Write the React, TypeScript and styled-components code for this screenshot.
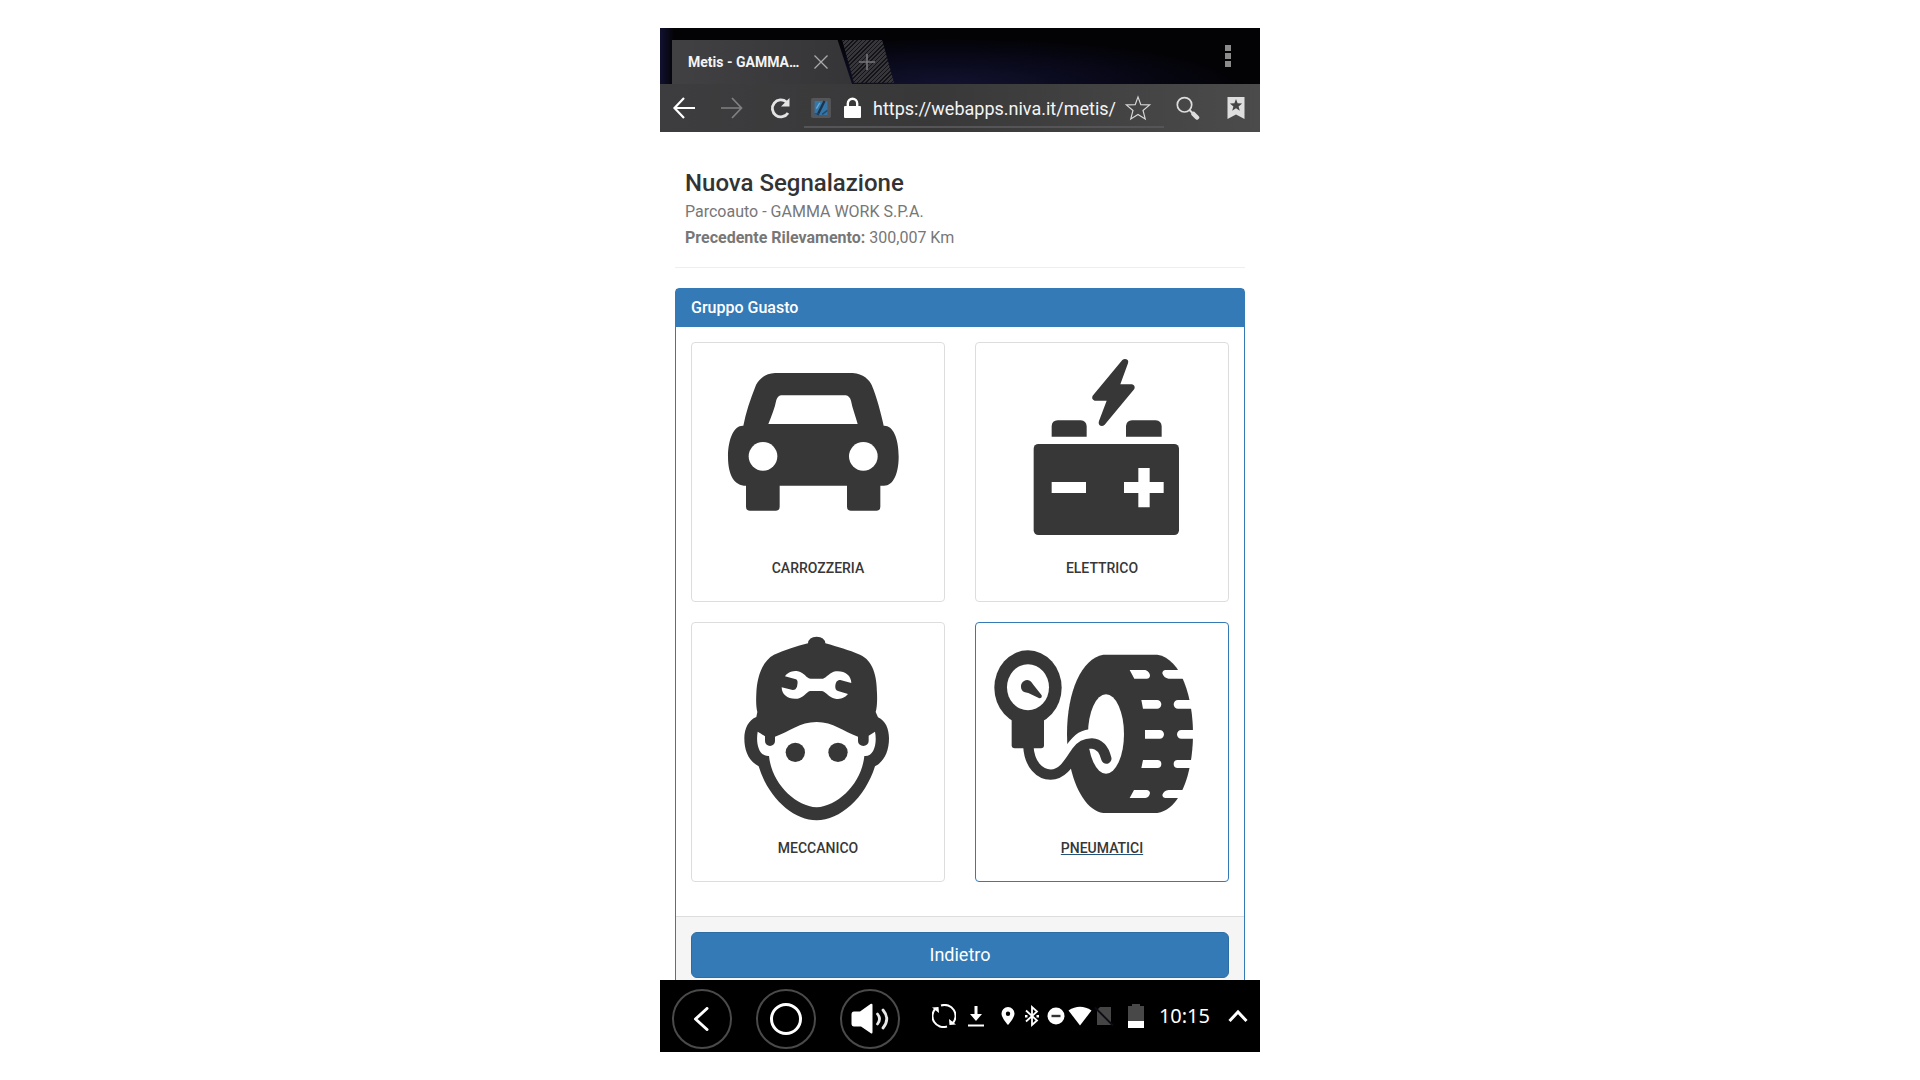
import React from "react";
import styled, { createGlobalStyle, css } from "styled-components";

const ink = "#373737";
const blue = "#337ab7";

const GlobalStyle = createGlobalStyle`
  *, *::before, *::after { box-sizing: border-box; }
  body { margin: 0; background: #fff; font-family: Roboto, "Liberation Sans", sans-serif; }
  button, input { font: inherit; }
  svg { display: block; }
`;

const Device = styled.div`
  display: flex;
  flex-direction: column;
  width: 100%;
  max-width: 600px;
  height: calc(100vh - 56px);
  margin: 28px auto;
  overflow: hidden;
  background: #fff;
`;

const plainButton = css`
  display: flex;
  align-items: center;
  justify-content: center;
  padding: 0;
  border: 0;
  background: none;
  color: inherit;
  cursor: pointer;
`;

const TabStrip = styled.header`
  display: flex;
  flex: none;
  align-items: flex-end;
  height: 56px;
  padding-left: 12px;
  background:
    linear-gradient(90deg, #111130 0, transparent 14px),
    radial-gradient(ellipse 290px 46px at 48% 100%, #12122f, #080818 60%, transparent),
    #030306;
`;

const Tab = styled.div`
  display: flex;
  align-items: center;
  width: 180px;
  height: 44px;
  padding: 0 19px 0 16px;
  background: linear-gradient(90deg, #414143, #353537);
  clip-path: polygon(0 0, 92% 0, 100% 100%, 0 100%);
  color: #f4f4f4;
`;

const TabTitle = styled.span`
  flex: 1;
  font-size: 14px;
  font-weight: 700;
  white-space: nowrap;
`;

const CloseTab = styled.button`
  ${plainButton}
  width: 24px;
  height: 24px;
`;

const NewTab = styled.button`
  ${plainButton}
  width: 54px;
  height: 44px;
  margin-left: -12px;
  background: repeating-linear-gradient(135deg, #131318 0 1px, #37373b 1px 3px);
  clip-path: polygon(4% 0, 78% 0, 100% 97%, 26% 97%);
`;

const MenuButton = styled.button`
  ${plainButton}
  align-self: center;
  width: 32px;
  height: 32px;
  margin-left: auto;
  margin-right: 16px;
`;

const Toolbar = styled.nav`
  display: flex;
  flex: none;
  height: 48px;
  background: linear-gradient(90deg, #3d3d3f, #383839 45%, #4b4b4b);
  color: #fff;
`;

const ToolButton = styled.button`
  ${plainButton}
  flex: none;
  width: 48px;
  height: 48px;
`;

const AddressBar = styled.div`
  display: flex;
  flex: 1;
  align-items: center;
  min-width: 0;
  height: 44px;
  padding: 6px 12px 0 3px;
  border: solid #555557;
  border-width: 0 0 2px;
`;

const AddressInput = styled.input`
  flex: 1;
  min-width: 0;
  height: 32px;
  padding: 0;
  border: 0;
  outline: 0;
  background: none;
  color: #f4f4f4;
  font-size: 18px;
`;

const StarButton = styled.button`
  ${plainButton}
  width: 28px;
  height: 28px;
`;

const Page = styled.main`
  flex: 1;
  min-height: 0;
  overflow: hidden;
  padding: 0 15px;
`;

const Intro = styled.header`
  padding: 35px 10px 16px;
  border-bottom: 1px solid #eee;
  color: #777;
  font-size: 16px;
  line-height: 26px;
`;

const Title = styled.h1`
  margin: 0;
  color: #333;
  font-size: 24px;
  font-weight: 500;
  line-height: 32px;
`;

const Line = styled.p`
  margin: 0;
`;

const Panel = styled.section`
  margin-top: 20px;
  border: 1px solid ${blue};
  border-radius: 4px;
`;

const PanelTitle = styled.h2`
  margin: 0;
  padding: 0 15px;
  background: ${blue};
  color: #fff;
  font-size: 16px;
  font-weight: 500;
  line-height: 38px;
`;

const Grid = styled.div`
  display: grid;
  grid-template-columns: 1fr 1fr;
  gap: 20px 30px;
  padding: 15px 15px 34px;
`;

const Card = styled.a<{ $active?: boolean }>`
  display: flex;
  flex-direction: column;
  padding-bottom: 20px;
  border: 1px solid ${(p) => (p.$active ? blue : "#ddd")};
  border-radius: 4px;
  color: ${ink};
  font-size: 14px;
  font-weight: 500;
  line-height: 26px;
  text-align: center;
  text-decoration: ${(p) => (p.$active ? "underline #23527c" : "none")};
`;

const Art = styled.svg`
  width: 100%;
  height: 212px;
  fill: ${ink};
`;

const PanelFooter = styled.footer`
  padding: 15px;
  border-top: 1px solid #ddd;
  background: #f5f5f5;
`;

const BackButton = styled.button`
  width: 100%;
  height: 46px;
  padding: 0 16px 2px;
  border: 1px solid #2e6da4;
  border-radius: 6px;
  background: ${blue};
  color: #fff;
  font-size: 18px;
`;

const SystemBar = styled.footer`
  display: flex;
  flex: none;
  align-items: center;
  justify-content: space-between;
  height: 72px;
  padding: 0 10px 0 12px;
  background: #000;
  color: #fff;
`;

const NavKeys = styled.div`
  display: flex;
  gap: 24px;
  padding-top: 6px;
`;

const NavKey = styled.button`
  ${plainButton}
  width: 60px;
  height: 60px;
  border: 2px solid #4a4a4a;
  border-radius: 50%;
`;

const Status = styled.div`
  display: flex;
  align-items: center;
  gap: 8px;
`;

const StatusGroup = styled.div`
  display: flex;
`;

const Clock = styled.time`
  padding: 0 8px 0 3px;
  font-family: "Noto Sans", "Open Sans", sans-serif;
  font-size: 20px;
  line-height: 24px;
`;

const MoreButton = styled.button`
  ${plainButton}
`;

type IconProps = { size?: number; children: React.ReactNode };

const Icon = ({ size = 24, children }: IconProps) => (
  <svg width={size} height={size} viewBox="0 0 24 24" fill="none" stroke="currentColor" strokeWidth="2" aria-hidden="true">
    {children}
  </svg>
);

const CarArt = () => (
  <Art viewBox="36 39 756 636" aria-hidden="true">
    <path d="M285 129H518C550 131 568 150 575 165C590 200 603 250 611 287C637 285 656 320 656 380C656 430 640 467 612 467H601V530Q601 542 589 542H513Q501 542 501 530V467H299V530Q299 542 287 542H210Q198 542 198 530V467C163 467 144 435 144 380C144 325 163 285 190 287C197 250 210 210 228 165C240 142 260 130 285 129Z" />
    <path fill="#fff" d="M303 196H497Q509 198 513 212C517 235 527 258 533 282H265C275 258 284 235 289 210Q293 198 303 196Z" />
    <circle cx="249" cy="379" r="43" fill="#fff" />
    <circle cx="550" cy="379" r="43" fill="#fff" />
  </Art>
);

const BatteryArt = () => (
  <Art viewBox="48 39 756 636" aria-hidden="true">
    <path d="M487 90Q495 84 503 90Q506 94 504 100L481 163H516Q527 167 523 177L434 284Q426 291 418 285Q414 280 417 273L440 212H404Q393 207 398 197Z" />
    <path d="M275 320V288Q276 272 293 271H362Q379 272 380 289V320ZM498 320V288Q500 272 516 271H587Q604 272 605 289V320Z" />
    <rect x="221" y="342" width="436" height="273" rx="14" />
    <path fill="#fff" d="M275 456H378V489H275ZM535 414H569V456H611V489H569V532H535V489H492V456H535Z" />
  </Art>
);

const MechanicArt = () => (
  <Art viewBox="36 39 756 636" aria-hidden="true">
    <path d="M384 100Q386 80 410 80Q434 80 436 100C475 111 505 120 540 134C580 152 591 200 591 250C592 275 591 292 587 306L594 322C617 332 627 358 627 385C627 425 612 455 585 469C555 565 480 631 410 631C340 631 265 565 236 469C207 453 193 425 193 385C193 355 206 330 229 321L232 306C228 290 228 270 229 250C231 195 250 151 282 134C315 120 350 108 384 100Z" />
    <path fill="#fff" d="M233 365Q243 371 255 379V393A15 15 0 0 0 285 393V380C330 365 358 336 410 336C460 336 490 365 534 380V393A16 15 0 0 0 566 393V377L585 365C592 400 582 441 553 438C545 520 475 588 410 592C345 588 275 520 267 438C236 440 227 400 233 365Z" />
    <circle cx="346" cy="427" r="29" />
    <circle cx="474" cy="427" r="29" />
    <path fill="#fff" d="M315 199C323 186 338 183 350 183C369 185 377 200 385 204Q388 206 392 206H429C440 203 449 187 467 184C492 181 514 195 514 219L481 210C470 210 468 217 466 226C465 235 467 241 474 243L504 252C495 264 481 267 470 267C450 265 440 250 433 246Q429 243 424 243H390C379 246 372 262 353 266C325 269 305 255 305 232L338 240C346 240 348 236 351 230C354 217 354 208 345 207Z" />
  </Art>
);

const TyreArt = () => (
  <Art viewBox="48 39 756 636" aria-hidden="true">
    <path d="M430 134H592C665 145 699 265 699 372C699 480 665 598 592 609H430C370 602 321 500 321 372C321 244 365 145 430 134Z" />
    <ellipse cx="438" cy="372" rx="54" ry="119" fill="#fff" />
    <path fill="#fff" d="M314 413C335 383 355 361 388 358L395 390C355 395 348 430 320 450Z" />
    <path d="M205 408C208 465 240 494 272 494C310 494 331 452 350 424C362 407 378 400 395 400C422 402 434 425 439 446" fill="none" stroke={ink} strokeWidth="31" strokeLinecap="round" />
    <ellipse cx="204" cy="233" rx="101" ry="112" />
    <rect x="155" y="300" width="97" height="115" rx="9" />
    <ellipse cx="204" cy="232" rx="63" ry="69" fill="#fff" />
    <path d="M186 241C178 226 187 210 202 210C211 211 215 217 220 224L245 256Q247 265 238 265L205 249Q190 247 186 241Z" />
    <path
      fill="#fff"
      d="M509 180H556Q570 186 570 197Q569 206 560 206H523ZM544 270H591A13 13 0 0 1 591 296H549ZM555 360H599A13 13 0 0 1 599 386H555ZM549 450H592A12 12 0 0 1 592 474H544ZM522 540H560Q569 541 570 549Q568 562 556 564H509ZM700 180H617Q607 181 607 190Q611 204 626 206H700ZM704 270H654A13 13 0 0 0 654 296H704ZM704 360H664A13 13 0 0 0 664 386H704ZM704 450H653A12 12 0 0 0 653 474H704ZM700 540H626Q611 541 607 555Q608 564 617 564H700Z"
    />
  </Art>
);

const groups = [
  { label: "CARROZZERIA", art: <CarArt /> },
  { label: "ELETTRICO", art: <BatteryArt /> },
  { label: "MECCANICO", art: <MechanicArt /> },
  { label: "PNEUMATICI", art: <TyreArt />, active: true },
];

export default function App() {
  return (
    <>
      <GlobalStyle />
      <Device>
        <TabStrip>
          <Tab>
            <TabTitle>Metis - GAMMA…</TabTitle>
            <CloseTab aria-label="Chiudi scheda">
              <svg width="14" height="14" viewBox="0 0 14 14" stroke="#aaa" strokeWidth="1.3">
                <path d="M.5.5l13 13M13.500.5l-13 13" />
              </svg>
            </CloseTab>
          </Tab>
          <NewTab aria-label="Nuova scheda">
            <svg width="16" height="16" viewBox="0 0 16 16" stroke="#77777b" strokeWidth="1.6">
              <path d="M8 0v16M0 8h16" />
            </svg>
          </NewTab>
          <MenuButton aria-label="Menu">
            <svg width="6" height="22" viewBox="0 0 6 22" fill="#8b8b8b">
              <path d="M0 0h6v6H0zM0 8h6v6H0zM0 16h6v6H0z" />
            </svg>
          </MenuButton>
        </TabStrip>

        <Toolbar aria-label="Browser">
          <ToolButton aria-label="Indietro nella cronologia">
            <Icon>
              <path strokeWidth="2.2" d="M23 12H3M12 2 2.500 12l9.500 10" />
            </Icon>
          </ToolButton>
          <ToolButton aria-label="Avanti">
            <Icon>
              <path stroke="#808080" strokeWidth="1.700" d="M1 12h20M12 2l9.500 10L12 22" />
            </Icon>
          </ToolButton>
          <ToolButton aria-label="Ricarica">
            <Icon>
              <path stroke="#e4e4e4" strokeWidth="2.8" d="M20 17A8.500 8.500 0 1 1 18.500 6" />
              <path fill="#e4e4e4" stroke="none" d="M21.500 2v8.500H13Z" />
            </Icon>
          </ToolButton>
          <AddressBar>
            <Icon size={28}>
              <rect x="3.500" y="3.500" width="17" height="17" rx="1.500" fill="#55565a" stroke="none" />
              <path fill="#3576a8" stroke="none" d="M6.500 6h11v12h-11z" />
              <path stroke="#1c3348" strokeWidth="2" d="M9 18 15 6" />
              <path stroke="#24486a" strokeWidth="1.200" d="M13 17.500l4.500-3.500M6.500 17h4" />
              <path stroke="#63acd8" strokeWidth="1.200" d="M8 12.500 11 7.500" />
            </Icon>
            <svg width="38" height="24" viewBox="0 0 38 24" aria-hidden="true">
              <rect x="9" y="10" width="17" height="12" rx="1" fill="#fff" />
              <path d="M12.800 11V7.500a4.700 4.700 0 0 1 9.400 0V11" fill="none" stroke="#fff" strokeWidth="2.400" />
            </svg>
            <AddressInput aria-label="Indirizzo" defaultValue="https://webapps.niva.it/metis/" />
            <StarButton aria-label="Aggiungi ai preferiti">
              <Icon size={28}>
                <path stroke="#d8d8d8" strokeWidth="1" d="m12 2.500 2.400 6.600 7.600.2-5.700 4.800 1.900 7.300L12 17.600l-6.200 3.800 1.900-7.300L2 9.300l7.600-.2Z" />
              </Icon>
            </StarButton>
          </AddressBar>
          <ToolButton aria-label="Cerca">
            <Icon>
              <circle cx="8.500" cy="8.800" r="7.200" stroke="#ddd" strokeWidth="1.700" />
              <path stroke="#ddd" strokeWidth="2" d="m13.500 14 3 3" />
              <path stroke="#ddd" strokeWidth="4.500" strokeLinecap="round" d="m17.500 18 3.500 3.500" />
            </Icon>
          </ToolButton>
          <ToolButton aria-label="Segnalibri">
            <Icon>
              <path fill="#dedede" stroke="none" d="M3.500 1h17v22L12 18.500 3.500 23Z" />
              <path fill="#444" stroke="none" d="m12 3 1.600 4.300 4.500.2-3.500 2.900 1.200 4.400L12 12.300l-3.800 2.500 1.200-4.400-3.500-2.900 4.500-.2Z" />
            </Icon>
          </ToolButton>
        </Toolbar>

        <Page>
          <Intro>
            <Title>Nuova Segnalazione</Title>
            <Line>Parcoauto - GAMMA WORK S.P.A.</Line>
            <Line>
              <b>Precedente Rilevamento:</b> 300,007 Km
            </Line>
          </Intro>
          <Panel>
            <PanelTitle>Gruppo Guasto</PanelTitle>
            <Grid>
              {groups.map((g) => (
                <Card key={g.label} href="#" $active={g.active}>
                  {g.art}
                  <span>{g.label}</span>
                </Card>
              ))}
            </Grid>
            <PanelFooter>
              <BackButton>Indietro</BackButton>
            </PanelFooter>
          </Panel>
        </Page>

        <SystemBar>
          <NavKeys>
            <NavKey aria-label="Indietro">
              <Icon>
                <path strokeWidth="3" strokeLinecap="round" strokeLinejoin="round" d="M17 1.500 5.500 12 17 22.500" />
              </Icon>
            </NavKey>
            <NavKey aria-label="Home">
              <svg width="32" height="32" viewBox="0 0 32 32" fill="none" stroke="#fff" strokeWidth="3">
                <circle cx="16" cy="16" r="14.500" />
              </svg>
            </NavKey>
            <NavKey aria-label="Volume">
              <svg width="38" height="32" viewBox="0 0 38 32" fill="#fff">
                <path d="M3 8.500h6L19.500 1Q21.500 0 21.500 2V29Q21.500 31.500 19.500 30L10 23.500H3Q.5 23.500.5 20.500V11.500Q.5 8.500 3 8.500Z" />
                <path fill="none" stroke="#e8e8e8" strokeWidth="2.800" strokeLinecap="round" d="M26.500 11q4 5 0 10M32 7q7.500 9 0 18" />
              </svg>
            </NavKey>
          </NavKeys>
          <Status>
            <Icon>
              <path d="M9 1.500A11 11 0 0 1 20.500 19.500M15 22.500A11 11 0 0 1 3.500 4.500" />
              <path fill="currentColor" stroke="none" d="M0 3.500l6.500-.5.5 6ZM24 20.500l-6.500.5-.5-6Z" />
            </Icon>
            <Icon>
              <path d="M12 2v9M4 21.500h16" />
              <path fill="currentColor" stroke="none" d="M6 10h12l-6 7ZM10.500 2h3v9h-3z" />
            </Icon>
            <StatusGroup>
              <Icon>
                <path fill="currentColor" fillRule="evenodd" stroke="none" d="M12 3a6.500 6.500 0 0 1 6.500 6.500C18.500 14 12 21 12 21S5.500 14 5.500 9.500A6.500 6.500 0 0 1 12 3Zm0 4.500a2.200 2.200 0 1 0 0 4.400 2.200 2.200 0 0 0 0-4.400Z" />
              </Icon>
              <Icon>
                <path strokeWidth="1.800" d="m6 6.500 11 10-5 4.500V3l5 4.500L6 17.500" />
                <path fill="currentColor" stroke="none" d="M5 11h2.500v2.500H5zM16.500 11H19v2.500h-2.500z" />
              </Icon>
              <Icon>
                <circle cx="12" cy="12" r="8.500" fill="currentColor" stroke="none" />
                <path stroke="#333" strokeWidth="2.400" d="M7.500 12h9" />
              </Icon>
              <Icon>
                <path fill="currentColor" stroke="none" d="M.5 6.500Q12-1 23.500 6.500L12 21.500Z" />
              </Icon>
              <Icon>
                <path fill="#454545" stroke="none" d="M8 3h11v18H5V6Z" />
                <path stroke="#0c0c14" strokeWidth="1.800" d="m3 3.500 18 18" />
              </Icon>
            </StatusGroup>
            <Icon>
              <path fill="#484848" stroke="none" d="M4 2h4V0h8v2h4v15H4Z" />
              <path fill="#fff" stroke="none" d="M4 17h16v7H4Z" />
            </Icon>
            <Clock>10:15</Clock>
            <MoreButton aria-label="Mostra altro">
              <Icon>
                <path strokeWidth="3" d="m3.500 17 8.500-9 8.500 9" />
              </Icon>
            </MoreButton>
          </Status>
        </SystemBar>
      </Device>
    </>
  );
}
